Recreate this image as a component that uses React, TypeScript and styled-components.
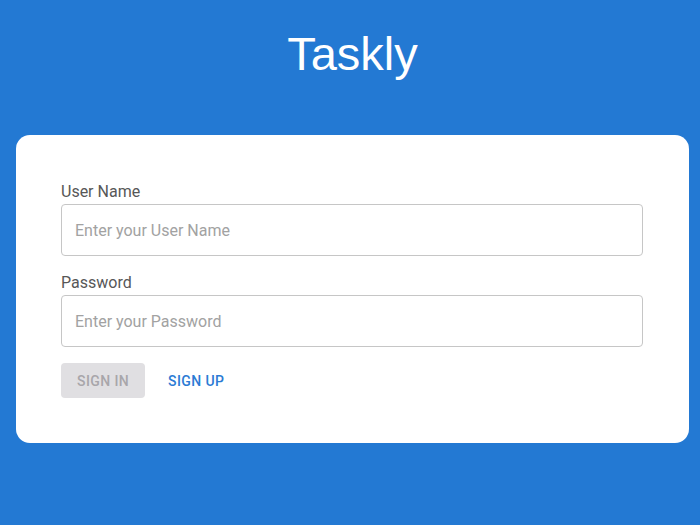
import React from "react";
import styled, { createGlobalStyle } from "styled-components";

const GlobalStyle = createGlobalStyle`
  * {
    box-sizing: border-box;
  }
  body {
    margin: 0;
    background-color: #2379d3;
    font-family: Roboto, "Liberation Sans", Arial, sans-serif;
  }
`;

const App: React.FC = () => {
  return (
    <Page>
      <GlobalStyle />
      <Title>Taskly</Title>
      <Card>
        <Field>
          <Label htmlFor="username">User Name</Label>
          <Input id="username" placeholder="Enter your User Name" />
        </Field>
        <Field>
          <Label htmlFor="password">Password</Label>
          <Input id="password" type="password" placeholder="Enter your Password" />
        </Field>
        <Actions>
          <SignIn disabled>Sign In</SignIn>
          <SignUp>Sign Up</SignUp>
        </Actions>
      </Card>
    </Page>
  );
};

const Page = styled.div`
  min-height: 525px;
  padding: 28px 11px 0 16px;
  background-color: #2379d3;
`;

const Title = styled.h1`
  margin: 0;
  text-align: center;
  color: #ffffff;
  font-family: "Liberation Sans", Arial, sans-serif;
  font-size: 47px;
  font-weight: 400;
  line-height: 51px;
`;

const Card = styled.div`
  margin-top: 56px;
  padding: 45px 46px 45px 45px;
  background-color: #ffffff;
  border-radius: 14px;
  display: flex;
  flex-direction: column;
  gap: 15px;
`;

const Field = styled.div`
  display: flex;
  flex-direction: column;
`;

const Label = styled.label`
  color: #575757;
  font-size: 16px;
  line-height: 24px;
`;

const Input = styled.input`
  height: 52px;
  padding: 0 13px;
  border: 1px solid #c6c6c6;
  border-radius: 4px;
  font-family: Roboto, "Liberation Sans", Arial, sans-serif;
  font-size: 16px;
  color: #333333;
  outline: none;
  &::placeholder {
    color: #a2a2a2;
  }
`;

const Actions = styled.div`
  display: flex;
  align-items: center;
  gap: 15px;
  margin-top: 1px;
`;

const Button = styled.button`
  height: 35px;
  padding: 0 16px;
  border: none;
  border-radius: 4px;
  font-family: Roboto, "Liberation Sans", Arial, sans-serif;
  font-size: 14px;
  font-weight: 500;
  letter-spacing: 0.4px;
  text-transform: uppercase;
  cursor: pointer;
`;

const SignIn = styled(Button)`
  background-color: #e0dfe2;
  color: #a8a6aa;
  cursor: default;
`;

const SignUp = styled(Button)`
  padding: 0 8px;
  background-color: transparent;
  color: #2b7bd4;
`;

export default App;
